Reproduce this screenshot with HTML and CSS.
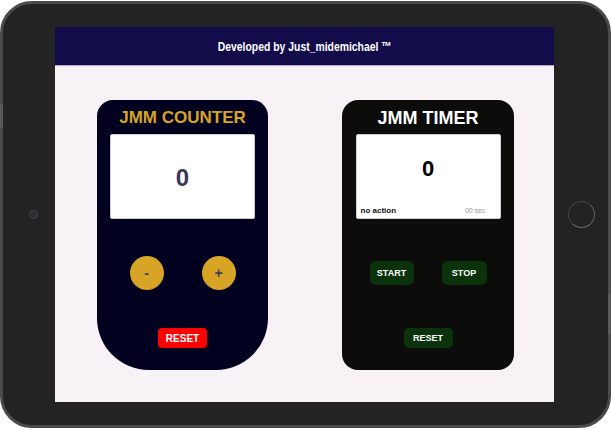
FILE: index.html
```html
<!DOCTYPE html>
<html>
<head>
<meta charset="utf-8">
<link rel="stylesheet" href="styles.css">
</head>
<body>
<div class="tablet">
  <div class="side-btn side-left"></div>
  <div class="side-btn side-right"></div>
  <div class="camera"></div>
  <div class="screen">
    <header class="topbar"><span class="brand">Developed by Just_midemichael ™</span></header>
    <main class="content">
      <section class="card counter">
        <h1 class="title gold">JMM COUNTER</h1>
        <div class="display">
          <span class="count">0</span>
        </div>
        <div class="row circles">
          <button class="circle">-</button>
          <button class="circle">+</button>
        </div>
        <button class="reset red">RESET</button>
      </section>
      <section class="card timer">
        <h1 class="title white">JMM TIMER</h1>
        <div class="display timer-display">
          <span class="time">0</span>
          <div class="status">
            <span class="action">no action</span>
            <span class="sec">00 sec</span>
          </div>
        </div>
        <div class="row greens">
          <button class="green">START</button>
          <button class="green">STOP</button>
        </div>
        <button class="reset green-reset">RESET</button>
      </section>
    </main>
  </div>
  <div class="home"></div>
</div>
</body>
</html>
```
FILE: styles.css
```css
html, body {
  margin: 0;
  padding: 0;
  background: #ffffff;
}
body {
  width: 611px;
  height: 428px;
  overflow: hidden;
  font-family: "Liberation Sans", Arial, sans-serif;
}
.tablet {
  position: relative;
  box-sizing: border-box;
  margin-top: 1px;
  width: 611px;
  height: 427px;
  border: 3px solid #4a4a4a;
  border-radius: 32px;
  background: #232323;
  display: flex;
  align-items: center;
}
.side-btn {
  position: absolute;
  width: 3px;
  background: #5a5a5a;
}
.side-left { left: -3px; top: 100px; height: 24px; }
.side-right { right: -3px; top: 290px; height: 40px; }
.camera {
  width: 9px;
  height: 9px;
  box-sizing: border-box;
  border-radius: 50%;
  background: #2c2c31;
  border: 1px solid #44444e;
  margin-left: 26px;
  margin-right: 17px;
}
.screen {
  width: 499px;
  height: 375px;
  display: flex;
  flex-direction: column;
  background: #f8f1f6;
}
.topbar {
  height: 39px;
  box-sizing: border-box;
  border-bottom: 1px solid #b8a8c8;
  background: #120c4a;
  color: #ffffff;
  display: flex;
  align-items: center;
  justify-content: center;
}
.brand {
  display: inline-block;
  font-family: "Liberation Sans", Arial, sans-serif;
  font-weight: bold;
  font-size: 13px;
  transform: scaleX(0.8);
}
.content {
  flex: 1;
  display: flex;
  align-items: flex-start;
  padding: 34px 0 0 42px;
  gap: 74px;
}
.card {
  box-sizing: border-box;
  width: 171px;
  height: 270px;
  padding-top: 8px;
  display: flex;
  flex-direction: column;
  align-items: center;
}
.counter {
  background: #01001e;
  border-radius: 16px 16px 52px 52px;
}
.timer {
  width: 172px;
  background: #0c0c0a;
  border-radius: 16px;
}
.title {
  margin: 0;
  font-size: 17px;
  line-height: 20px;
  font-weight: bold;
}
.gold { color: #d8a426; }
.white { color: #ffffff; font-size: 18px; }
.display {
  margin-top: 6px;
  width: 145px;
  height: 85px;
  box-sizing: border-box;
  background: #ffffff;
  border: 1px solid #cfcfd6;
  border-radius: 2px;
  display: flex;
  align-items: center;
  justify-content: center;
}
.count {
  color: #3a3660;
  font-size: 24px;
  font-weight: bold;
  margin-top: 2px;
}
.timer-display {
  flex-direction: column;
  align-items: stretch;
  justify-content: flex-start;
}
.time {
  margin-top: 21px;
  text-align: center;
  color: #000000;
  font-size: 22px;
  font-weight: bold;
  line-height: 26px;
}
.status {
  margin-top: auto;
  margin-bottom: 3px;
  padding: 0 14px 0 4px;
  display: flex;
  justify-content: space-between;
  align-items: baseline;
}
.action {
  font-size: 8px;
  font-weight: bold;
  color: #111111;
}
.sec {
  font-size: 7px;
  color: #9a9a9a;
}
.row {
  display: flex;
  justify-content: center;
}
.circles {
  margin-top: 37px;
  gap: 38px;
}
.circle {
  width: 34px;
  height: 34px;
  border: none;
  border-radius: 50%;
  background: #d8a426;
  color: #3e3d58;
  font-family: "Liberation Sans", Arial, sans-serif;
  font-size: 14px;
  font-weight: bold;
  padding: 0;
}
button {
  cursor: pointer;
}
.reset {
  width: 49px;
  height: 20px;
  border: none;
  padding: 0;
  border-radius: 4px;
  color: #ffffff;
  font-family: "Liberation Sans", Arial, sans-serif;
  font-weight: bold;
  font-size: 10px;
}
.red {
  margin-top: 38px;
  background: #ff0000;
}
.greens {
  margin-top: 42px;
  gap: 28px;
}
.green {
  width: 44px;
  height: 24px;
  border: none;
  padding: 0;
  border-radius: 6px;
  background: #0a330c;
  color: #ffffff;
  font-family: "Liberation Sans", Arial, sans-serif;
  font-weight: bold;
  font-size: 9px;
}
.green + .green { width: 45px; }
.green-reset {
  margin-top: 43px;
  background: #0a330c;
  border-radius: 5px;
  font-size: 9px;
}
.home {
  margin-left: 14px;
  width: 27px;
  height: 27px;
  box-sizing: border-box;
  border-radius: 50%;
  border: 1px solid #444444;
  border-bottom-color: #6a6a6a;
  border-right-color: #5e5e5e;
}
```
